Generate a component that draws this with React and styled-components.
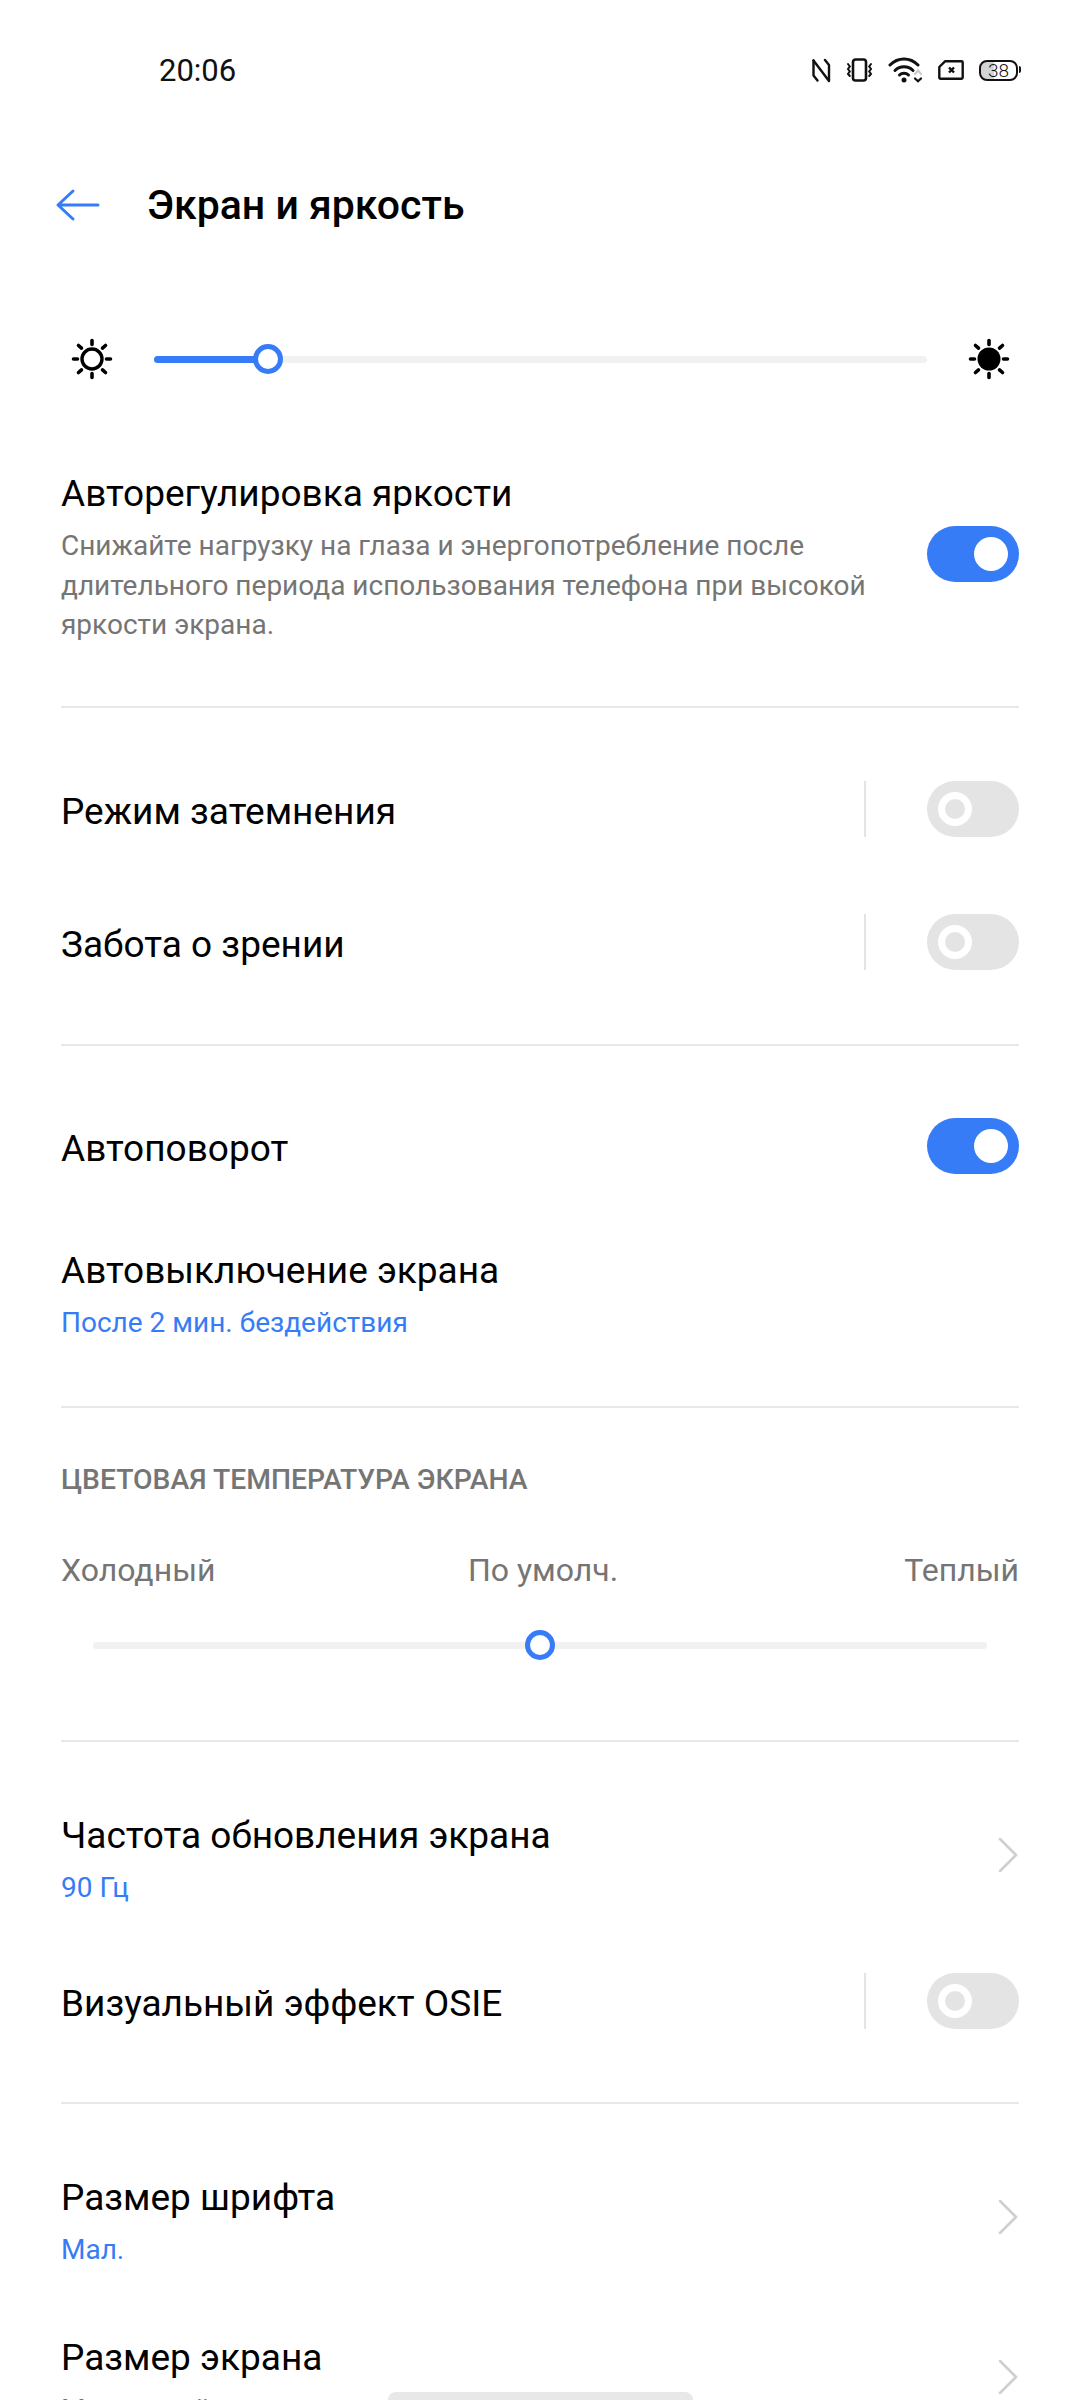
import React from 'react';
import styled, { createGlobalStyle } from 'styled-components';

const BLUE = '#367cf6';

const GlobalStyle = createGlobalStyle`
  html, body {
    margin: 0;
    padding: 0;
    background: #fff;
  }
  body {
    font-family: Roboto, "Noto Sans", sans-serif;
    color: #000;
  }
`;

const Page = styled.div`
  position: relative;
  width: 1080px;
  height: 2400px;
  overflow: hidden;
  background: #fff;
`;

const StatusBar = styled.div`
  height: 140px;
  display: flex;
  align-items: center;
  justify-content: space-between;
  padding: 0 60px 0 159px;
`;

const Time = styled.div`
  font-size: 31px;
  color: #111;
`;

const StatusIcons = styled.div`
  display: flex;
  align-items: center;
  gap: 15px;
`;

const Header = styled.div`
  height: 130px;
  display: flex;
  align-items: center;
  padding-left: 55px;
`;

const BackButton = styled.svg`
  width: 46px;
  height: 34px;
  margin-right: 46px;
`;

const Title = styled.h1`
  margin: 0;
  font-size: 41px;
  font-weight: 500;
`;

const BrightnessRow = styled.div`
  height: 178px;
  display: flex;
  align-items: center;
  padding: 0 69px 0 70px;
  gap: 40px;
`;

const Track = styled.div`
  position: relative;
  flex: 1;
  height: 7px;
  border-radius: 4px;
  background: #f1f1f1;
`;

const TrackFill = styled.div`
  height: 100%;
  border-radius: 4px;
  background: ${BLUE};
`;

const Thumb = styled.div`
  position: absolute;
  top: 50%;
  width: 30px;
  height: 30px;
  box-sizing: border-box;
  border: 5px solid ${BLUE};
  border-radius: 50%;
  background: #fff;
  transform: translate(-50%, -50%);
`;

const Content = styled.div`
  padding: 0 61px;
`;

const Section = styled.div`
  padding: ${(p) => p.$top || 0}px 0 ${(p) => p.$bottom || 0}px;
  border-bottom: ${(p) => (p.$last ? 'none' : '2px solid #e8e8e8')};
`;

const Row = styled.div`
  height: ${(p) => p.$height || 133}px;
  margin-top: ${(p) => p.$gap || 0}px;
  display: flex;
  align-items: center;
  justify-content: space-between;
`;

const TopRow = styled.div`
  display: flex;
  align-items: flex-start;
  justify-content: space-between;
`;

const TextBlock = styled.div`
  margin-top: ${(p) => p.$gap || 0}px;
`;

const Label = styled.div`
  font-size: 37px;
  line-height: 50px;
  color: #000;
  position: relative;
  top: ${(p) => (p.$raised ? -1 : 3)}px;
`;

const Description = styled.div`
  width: 810px;
  margin-top: 6px;
  font-size: 28px;
  line-height: 39.5px;
  color: #757575;
`;

const SubValue = styled.div`
  margin-top: 10px;
  font-size: 28px;
  line-height: 40px;
  color: ${BLUE};
`;

const Controls = styled.div`
  display: flex;
  align-items: center;
`;

const SwitchSlot = styled.div`
  margin-top: 56px;
`;

const VDivider = styled.div`
  width: 2px;
  height: 56px;
  margin-right: 61px;
  background: #e4e4e4;
`;

const SwitchBody = styled.div`
  width: 92px;
  height: 56px;
  box-sizing: border-box;
  padding: 11px;
  border-radius: 28px;
  display: flex;
  justify-content: ${(p) => (p.$on ? 'flex-end' : 'flex-start')};
  background: ${(p) => (p.$on ? BLUE : '#e4e4e4')};
`;

const SwitchKnob = styled.div`
  width: 34px;
  height: 34px;
  box-sizing: border-box;
  border-radius: 50%;
  background: ${(p) => (p.$on ? '#fff' : '#e4e4e4')};
  border: ${(p) => (p.$on ? 'none' : '7px solid #fff')};
`;

const SectionLabel = styled.div`
  font-size: 28.3px;
  line-height: 36px;
  font-weight: 500;
  color: #757575;
`;

const TempLabels = styled.div`
  display: grid;
  grid-template-columns: 1fr auto 1fr;
  margin-top: 52px;
  font-size: 32px;
  line-height: 40px;
  color: #757575;
`;

const TempCenter = styled.span`
  padding-left: 6px;
`;

const TempRight = styled.span`
  text-align: right;
`;

const TempTrackWrap = styled.div`
  padding: 0 32px;
  margin-top: 52px;
`;

const Chevron = styled.svg`
  width: 22px;
  height: 36px;
  margin-top: -6px;
`;

const HomeIndicator = styled.div`
  position: absolute;
  left: 388px;
  bottom: 0;
  width: 305px;
  height: 8px;
  border-radius: 8px 8px 0 0;
  background: #e8e8e8;
`;

const BatteryBox = styled.div`
  position: relative;
  width: 39px;
  height: 21px;
  box-sizing: border-box;
  border: 2.5px solid #111;
  border-radius: 8px;
  display: flex;
  align-items: center;
  justify-content: center;
  font-size: 19px;
  font-weight: 300;
  color: #111;
  background: linear-gradient(90deg, #d4d4d4 38%, #fff 38%);
  margin-right: 2px;

  &::after {
    content: '';
    position: absolute;
    right: -5px;
    top: 4.5px;
    width: 2.5px;
    height: 7px;
    border-radius: 0 2px 2px 0;
    background: #111;
  }
`;

const SunIcon = ({ filled }) => (
  <svg width="44" height="44" viewBox="0 0 44 44">
    <circle cx="22" cy="22" r={filled ? 11.5 : 10} fill={filled ? '#000' : 'none'} stroke="#000" strokeWidth={filled ? 0 : 3.4} />
    <g stroke="#000" strokeWidth="3.6" strokeLinecap="round">
      <path d="M22 3.5v4M22 36.5v4M3.5 22h4M36.5 22h4M8.5 8.5l3 2.6M32.5 32.9l3 2.6M35.5 8.5l-3 2.6M11.5 32.9l-3 2.6" />
    </g>
  </svg>
);

const NfcIcon = () => (
  <svg width="19" height="25" viewBox="0 0 19 25" fill="none" stroke="#111" strokeWidth="2.4" strokeLinejoin="round" strokeLinecap="round">
    <path d="M1.5 2.5v15l4 5" />
    <path d="M1.5 2.5L17 23V7l-4-5" />
  </svg>
);

const VibrateIcon = () => (
  <svg width="27" height="24" viewBox="0 0 27 24" fill="none" stroke="#111" strokeLinecap="round">
    <rect x="7" y="1.5" width="13" height="21" rx="2.5" strokeWidth="2.6" />
    <path d="M2 6l1.8 2.5L2 11l1.8 2.5L2 16l1.8 2M25 6l-1.8 2.5L25 11l-1.8 2.5L25 16l-1.8 2" strokeWidth="2" />
  </svg>
);

const WifiIcon = () => (
  <svg width="35" height="26" viewBox="0 0 35 26" fill="none" strokeLinecap="round">
    <g stroke="#111" strokeWidth="3">
      <path d="M2 8C10 0 22 0 30 8" />
      <path d="M7 13.5C12 8.5 20 8.5 25 13.5" />
      <path d="M11.5 18C14 15.5 18 15.5 20.5 18" />
    </g>
    <circle cx="16" cy="23" r="2.5" fill="#111" />
    <path d="M27 17l3-3.5 3 3.5" stroke="#ccc" strokeWidth="2.2" />
    <path d="M27 21.5l3 2.8 3-2.8" stroke="#111" strokeWidth="2.2" />
  </svg>
);

const SimIcon = () => (
  <svg width="26" height="20" viewBox="0 0 26 20" fill="none">
    <path d="M7 1.3h16.5a1.2 1.2 0 0 1 1.2 1.2v15a1.2 1.2 0 0 1-1.2 1.2H2.5a1.2 1.2 0 0 1-1.2-1.2V7z" stroke="#111" strokeWidth="2.4" strokeLinejoin="round" />
    <path d="M11 7.5l5 5M16 7.5l-5 5" stroke="#111" strokeWidth="2.4" />
  </svg>
);

const Switch = ({ on }) => (
  <SwitchBody $on={on}>
    <SwitchKnob $on={on} />
  </SwitchBody>
);

const DividedSwitch = () => (
  <Controls>
    <VDivider />
    <Switch />
  </Controls>
);

const ChevronRight = () => (
  <Chevron viewBox="0 0 22 36" fill="none">
    <path d="M3 2l16 16L3 34" stroke="#cfcfcf" strokeWidth="2.6" strokeLinecap="round" strokeLinejoin="round" />
  </Chevron>
);

export default function App() {
  return (
    <Page>
      <GlobalStyle />
      <StatusBar>
        <Time>20:06</Time>
        <StatusIcons>
          <NfcIcon />
          <VibrateIcon />
          <WifiIcon />
          <SimIcon />
          <BatteryBox>38</BatteryBox>
        </StatusIcons>
      </StatusBar>

      <Header>
        <BackButton viewBox="0 0 46 34" fill="none">
          <path d="M43 17H4M18 3L3 17l15 14" stroke={BLUE} strokeWidth="3" strokeLinecap="round" strokeLinejoin="round" />
        </BackButton>
        <Title>Экран и яркость</Title>
      </Header>

      <BrightnessRow>
        <SunIcon />
        <Track>
          <TrackFill style={{ width: '14.8%' }} />
          <Thumb style={{ left: '14.8%' }} />
        </Track>
        <SunIcon filled />
      </BrightnessRow>

      <Content>
        <Section $top={22} $bottom={61}>
          <TopRow>
            <div>
              <Label $raised>Авторегулировка яркости</Label>
              <Description>
                Снижайте нагрузку на глаза и энергопотребление после длительного периода использования телефона при высокой яркости экрана.
              </Description>
            </div>
            <SwitchSlot>
              <Switch on />
            </SwitchSlot>
          </TopRow>
        </Section>

        <Section $top={35} $bottom={35}>
          <Row>
            <Label>Режим затемнения</Label>
            <DividedSwitch />
          </Row>
          <Row>
            <Label>Забота о зрении</Label>
            <DividedSwitch />
          </Row>
        </Section>

        <Section $top={34} $bottom={63}>
          <Row>
            <Label>Автоповорот</Label>
            <Switch on />
          </Row>
          <TextBlock $gap={30}>
            <Label>Автовыключение экрана</Label>
            <SubValue>После 2 мин. бездействия</SubValue>
          </TextBlock>
        </Section>

        <Section $top={54} $bottom={91}>
          <SectionLabel>ЦВЕТОВАЯ ТЕМПЕРАТУРА ЭКРАНА</SectionLabel>
          <TempLabels>
            <span>Холодный</span>
            <TempCenter>По умолч.</TempCenter>
            <TempRight>Теплый</TempRight>
          </TempLabels>
          <TempTrackWrap>
            <Track>
              <Thumb style={{ left: '50%' }} />
            </Track>
          </TempTrackWrap>
        </Section>

        <Section $top={71} $bottom={34}>
          <Row $height={90}>
            <div>
              <Label>Частота обновления экрана</Label>
              <SubValue>90 Гц</SubValue>
            </div>
            <ChevronRight />
          </Row>
          <Row $gap={32}>
            <Label>Визуальный эффект OSIE</Label>
            <DividedSwitch />
          </Row>
        </Section>

        <Section $top={71} $last>
          <Row $height={90}>
            <div>
              <Label>Размер шрифта</Label>
              <SubValue>Мал.</SubValue>
            </div>
            <ChevronRight />
          </Row>
          <Row $height={90} $gap={70}>
            <div>
              <Label>Размер экрана</Label>
              <SubValue>Маленький</SubValue>
            </div>
            <ChevronRight />
          </Row>
        </Section>
      </Content>

      <HomeIndicator />
    </Page>
  );
}
